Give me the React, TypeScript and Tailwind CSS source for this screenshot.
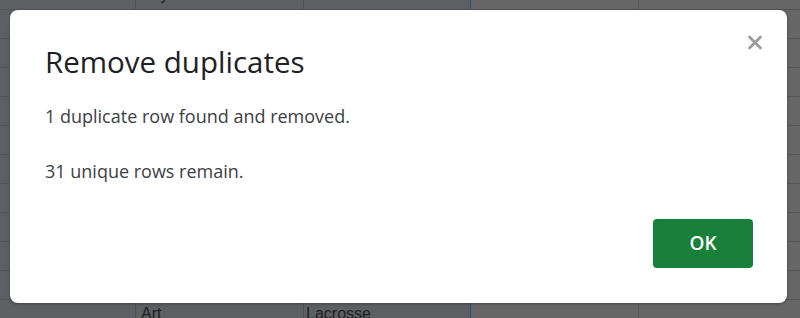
import React from "react";

const rows = Array.from({ length: 12 }, (_, i) => i);

function Sheet() {
  return (
    <div className="-mt-[19px] flex flex-col">
      {rows.map((i) => (
        <div key={i} className="flex h-[29px] border-b border-[#535458]">
          <div className="w-[135px] shrink-0 bg-[#5e5f63]" />
          <div className="flex w-[168px] shrink-0 items-center border-l border-[#4f5054] bg-[#5e5f63] pl-[5px] text-[16px] text-[#1d1e21]">
            {i === 0 ? "Physics" : i === 11 ? "Art" : ""}
          </div>
          <div className="flex w-[167px] shrink-0 items-center border-l border-[#4f5054] bg-[#5e5f63] pl-[2px] text-[16px] text-[#1d1e21]">
            {i === 0 ? "Drama Club" : i === 11 ? "Lacrosse" : ""}
          </div>
          <div className="w-[168px] shrink-0 border-l border-[#2f4d86] bg-[#666666]" />
          <div className="flex-1 border-l border-[#5a5a5a] bg-[#666666]" />
        </div>
      ))}
    </div>
  );
}

export default function App() {
  return (
    <div
      className="relative h-[318px] w-[800px] overflow-hidden bg-[#666666]"
      style={{ fontFamily: "'Liberation Sans', Arial, sans-serif" }}
    >
      <Sheet />
      <div
        className="absolute left-[10px] top-[10px] flex h-[293px] w-[777px] flex-col rounded-[8px] bg-white shadow-[0_1px_3px_rgba(0,0,0,0.3)]"
        style={{ fontFamily: "'Open Sans', Roboto, sans-serif" }}
      >
        <svg
          width="16"
          height="15"
          viewBox="0 0 16 15"
          className="absolute right-[24px] top-[25px] block"
        >
          <path d="M2.5 2 L13.5 13 M13.5 2 L2.5 13" stroke="#9b9b9b" strokeWidth="2.8" strokeLinecap="round" />
        </svg>
        <div className="mt-[36px] pl-[35px] text-[29.5px] leading-[32px] text-[#202124]">
          Remove duplicates
        </div>
        <div className="mt-[26px] pl-[35px] text-[18px] leading-[24px] text-[#3c4043]">
          1 duplicate row found and removed.
        </div>
        <div className="mt-[31px] pl-[35px] text-[18px] leading-[24px] text-[#3c4043]">
          31 unique rows remain.
        </div>
        <div className="mt-[36px] flex justify-end pr-[34px]">
          <button className="flex h-[49px] w-[100px] items-center justify-center rounded-[4px] bg-[#188038] text-[19px] font-semibold text-white">
            OK
          </button>
        </div>
      </div>
    </div>
  );
}
